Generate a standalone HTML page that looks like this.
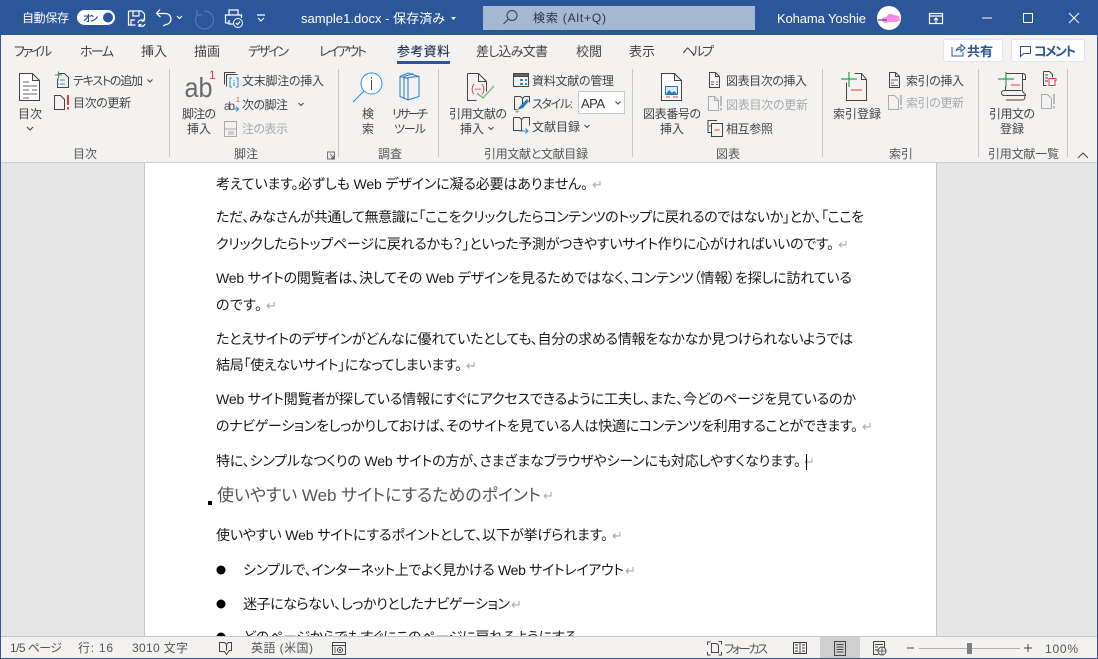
<!DOCTYPE html>
<html lang="ja"><head><meta charset="utf-8"><title>sample1.docx</title>
<style>
html,body{margin:0;padding:0;width:1098px;height:659px;overflow:hidden;background:#f3f2f1}
svg{display:block}
text{font-family:"Liberation Sans","Noto Sans CJK JP",sans-serif;font-feature-settings:"palt"}
.w{fill:#fff;font-size:12px}
.r{fill:#444;font-size:12px}
.g{fill:#a9a9a9;font-size:12px}
.d{fill:#1a1a1a;font-size:14px}
.a{fill:#aaa;font-size:13px}
.s{fill:#555;font-size:12px}
.i{fill:none;stroke:#444;stroke-width:1}
.ig{fill:none;stroke:#aaa;stroke-width:1}
.wi{fill:none;stroke:#fff;stroke-width:1.2}
</style></head><body>
<svg width="1098" height="659" viewBox="0 0 1098 659" xmlns="http://www.w3.org/2000/svg">
<!-- backgrounds -->
<rect width="1098" height="659" fill="#f3f2f1"/>
<rect x="0" y="162" width="1098" height="475" fill="#e6e6e6"/>
<rect x="0" y="162" width="1098" height="1" fill="#d0d0d0"/>
<rect x="145" y="163" width="791" height="474" fill="#fff"/>
<rect x="144" y="163" width="1" height="474" fill="#c6c6c6"/>
<rect x="936" y="163" width="1" height="474" fill="#c6c6c6"/>
<rect width="1098" height="35" fill="#2b579a"/>
<rect x="0" y="0" width="1" height="659" fill="#2b579a"/>
<rect x="1097" y="0" width="1" height="659" fill="#2b579a"/>
<rect x="0" y="658" width="1098" height="1" fill="#2b579a"/>

<!-- title bar -->
<text class="w" x="22" y="22" textLength="47">自動保存</text>
<rect x="77" y="10" width="38" height="15" rx="7.500" fill="#fff"/>
<text x="83" y="21.500" font-size="9" fill="#2b579a" textLength="15" font-weight="700">オン</text>
<circle cx="108" cy="17.500" r="5" fill="#2b579a"/>
<path class="wi" d="M128.500 11h13l3 3v6M128.500 11v14h7M133 11v5h6v-5M131 25v-5h4"/>
<path class="wi" d="M138 23a3.500 3.500 0 0 1 6-2m1 3a3.500 3.500 0 0 1-6 1M144 18.500v2.500h-2.500M139 27v-2.500h2.500"/>
<path class="wi" d="M160 9.500l-3.500 4 4 3.500M157 13.500h8a5.500 5.500 0 0 1 1 11l-3 1.500"/>
<path class="wi" d="M177 16l2.500 2.500 2.500-2.500" stroke-width="1"/>
<path d="M204 11a9 9 0 1 1-7 4M197 10v5h5" fill="none" stroke="#5578ae" stroke-width="1.200"/>
<path class="wi" d="M229 15v-5h9v5M225.500 23v-8h16v3M229 23h-3.500M229 20v4h4"/>
<circle cx="238" cy="23" r="4.500" fill="#2b579a" stroke="#fff"/>
<path class="wi" d="M236 23l1.500 1.500 2.500-3" stroke-width=".9"/>
<path class="wi" d="M257 15h8M258 18l3 3 3-3" stroke-width="1"/>
<text x="301" y="23" font-size="13" fill="#fff" textLength="144">sample1.docx  -  保存済み</text>
<path d="M451 17h5l-2.500 3z" fill="#fff"/>
<rect x="483" y="6" width="272" height="24" fill="#a5b8d2"/>
<circle cx="512" cy="15.500" r="5" fill="none" stroke="#2a3f5f" stroke-width="1"/>
<path d="M508.500 19l-5 5" stroke="#2a3f5f" stroke-width="1"/>
<text x="533" y="22" font-size="12" fill="#26344a" textLength="73">検索 (Alt+Q)</text>
<text x="777" y="23" font-size="13" fill="#fff" textLength="89">Kohama Yoshie</text>
<circle cx="889" cy="18" r="12" fill="#fff"/>
<path d="M882 18l4-1 3-3h3l2 1 5 1 1 4-3 2h-8l-4 1-3-2z" fill="#f58ae8"/>
<path d="M878 20h9" stroke="#333" stroke-width="1"/>
<path class="wi" d="M929.500 13.500h13v10h-13zM929.500 16h13M936 23v-5M934 20l2-2 2 2" stroke-width="1"/>
<path d="M982 18h10" stroke="#fff" stroke-width="1"/>
<rect x="1023.500" y="13.500" width="9" height="9" fill="none" stroke="#fff"/>
<path d="M1069 13l10 10M1079 13l-10 10" stroke="#fff" stroke-width="1"/>

<!-- tabs -->
<g>
<text class="r" x="14" y="56" textLength="38" style="font-size:13px">ファイル</text>
<text class="r" x="80" y="56" textLength="34" style="font-size:13px">ホーム</text>
<text class="r" x="141" y="56" textLength="26" style="font-size:13px">挿入</text>
<text class="r" x="194" y="56" textLength="26" style="font-size:13px">描画</text>
<text class="r" x="248" y="56" textLength="41" style="font-size:13px">デザイン</text>
<text class="r" x="319" y="56" textLength="48" style="font-size:13px">レイアウト</text>
<text x="397" y="56" textLength="53" style="font-size:13px;fill:#2b3f60;font-weight:500">参考資料</text>
<text class="r" x="476" y="56" textLength="72" style="font-size:13px">差し込み文書</text>
<text class="r" x="576" y="56" textLength="26" style="font-size:13px">校閲</text>
<text class="r" x="629" y="56" textLength="26" style="font-size:13px">表示</text>
<text class="r" x="682" y="56" textLength="32" style="font-size:13px">ヘルプ</text>
</g>
<rect x="397" y="61" width="53" height="3" fill="#2b579a"/>
<rect x="943.500" y="39.500" width="59" height="22" rx="2" fill="#fff" stroke="#e4e4e4"/>
<path d="M952 47v9h11v-4M956 51c1-3 3-4 5-4v-2.500l4 3.500-4 3.500V49c-2 0-4 1-5 2z" fill="none" stroke="#2b579a"/>
<text x="967" y="56" textLength="26" style="font-size:13px;fill:#2b579a;font-weight:700">共有</text>
<rect x="1011.500" y="39.500" width="73" height="22" rx="2" fill="#fff" stroke="#e4e4e4"/>
<path d="M1020.500 46.500h10v7h-7l-3 3z" fill="none" stroke="#2b579a"/>
<text x="1034" y="56" textLength="42" style="font-size:13px;fill:#2b579a;font-weight:700">コメント</text>

<!-- group separators -->
<g fill="#c6c6c6">
<rect x="169" y="69" width="1" height="88"/><rect x="338" y="69" width="1" height="88"/>
<rect x="438" y="69" width="1" height="88"/><rect x="632" y="69" width="1" height="88"/>
<rect x="822" y="69" width="1" height="88"/><rect x="978" y="69" width="1" height="88"/>
<rect x="1067" y="69" width="1" height="88"/>
</g>

<!-- 目次 group -->
<path class="i" d="M19.500 73.500h13l7 7v20h-20zM32.500 73.500v7h7" style="fill:#fff"/>
<path d="M23 82h6M23 86h14M23 90h6M32 90h5M23 94h14M23 98h6" stroke="#666"/>
<text class="r" x="18" y="118" textLength="24">目次</text>
<path class="i" d="M27 127l3 3 3-3"/>
<path class="i" d="M58.500 73.500h6l4 4v10h-11v-9"/>
<path d="M55 75h7M58.500 71.500v7" stroke="#2d9e4c" fill="none"/>
<path d="M60 80h5M60 84h5" stroke="#2b88d8"/>
<path d="M57 80h2M57 84h2" stroke="#2b88d8"/>
<text class="r" x="73" y="85" textLength="70">テキストの追加</text>
<path class="i" d="M147.500 79.500l2.500 2.500 2.500-2.500"/>
<path class="i" d="M54.500 95.500h6l4 4v10h-10z"/>
<rect x="67" y="95" width="2" height="10" fill="#e83a3a"/><rect x="67" y="107" width="2" height="2.500" fill="#e83a3a"/>
<text class="r" x="73" y="107" textLength="58">目次の更新</text>
<text class="s" x="73" y="158" textLength="24">目次</text>

<!-- 脚注 group -->
<text x="184.500" y="97" style="font-size:28px;fill:#6a6a6a" textLength="28" lengthAdjust="spacingAndGlyphs">ab</text>
<text x="209" y="79" style="font-size:12px;fill:#e83a3a">1</text>
<text class="r" x="182" y="118" textLength="34">脚注の</text>
<text class="r" x="187" y="133" textLength="24">挿入</text>
<path class="i" d="M224.500 84.500v-12h11M226.500 86.500v-12h11"/>
<path d="M232 78h-2v9h2M236 78h2v9h-2M234 80v1M234 82v4" fill="none" stroke="#2b88d8"/>
<text class="r" x="242" y="85" textLength="82">文末脚注の挿入</text>
<text x="224" y="110" style="font-size:12px;fill:#555" textLength="11">ab</text>
<text x="236" y="102" style="font-size:7px;fill:#e83a3a">1</text>
<path d="M233 109h5M236 106.500l2.500 2.500-2.500 2.500" fill="none" stroke="#2b88d8"/>
<text class="r" x="242" y="109" textLength="46">次の脚注</text>
<path class="i" d="M298.500 103l2.500 2.500 2.500-2.500"/>
<path class="ig" d="M224.500 121.500h12v15h-12zM224.500 129h12M228 132h6M228 134h6"/>
<text class="g" x="242" y="133" textLength="46">注の表示</text>
<text class="s" x="234" y="158" textLength="24">脚注</text>
<path d="M327.500 159v-7h7v7zM330 154l4 4M331 158h3v-3" fill="none" stroke="#666" stroke-width=".9"/>

<!-- 調査 group -->
<circle cx="371.500" cy="83.500" r="10.500" fill="#fff" stroke="#2b88d8" stroke-width="1"/>
<path d="M364 91l-11 11" stroke="#2b88d8" stroke-width="1"/>
<path d="M371.500 80v10" stroke="#444"/><rect x="371" y="77" width="1" height="1.500" fill="#444"/>
<text class="r" x="362" y="118">検</text>
<text class="r" x="362" y="133">索</text>
<path d="M400 76.500l8-3.500 11 3.500v20l-11 3.500-8-3.500zM408 99.500v-22l11-1M404 98.500v-22l9-3M400 76.500l8 2" fill="none" stroke="#2b78c8"/>
<text class="r" x="392" y="118" textLength="36">リサーチ</text>
<text class="r" x="394" y="133" textLength="32">ツール</text>
<text class="s" x="378" y="158" textLength="24">調査</text>

<!-- 引用文献 group -->
<path class="i" d="M467.500 73.500h11l8 8v10M467.500 73.500v27h9M478.500 73.500v8h8"/>
<text x="471" y="92" style="font-size:11px;fill:#e83a3a" textLength="14">(–)</text>
<path d="M477 93l6 5 11-12" fill="none" stroke="#6bb56b" stroke-width="1.200"/>
<text class="r" x="449" y="118" textLength="58">引用文献の</text>
<text class="r" x="460" y="133" textLength="24">挿入</text>
<path class="i" d="M488.500 127l2.500 2.500 2.500-2.500"/>
<path class="i" d="M513.500 73.500h15v13h-15zM513.500 76.500h15M513.500 73.500v13"/>
<rect x="514" y="74" width="14" height="2" fill="#666"/>
<path d="M520 79h3v2h-3zM525 79h2v2h-2zM520 83h3v2h-3zM525 83h2v2h-2z" fill="#2b88d8"/>
<text class="r" x="532" y="85" textLength="82">資料文献の管理</text>
<path class="i" d="M514.500 96.500h6l2 2 2-2h5v6M522.500 98.500v6M514.500 96.500v13h2"/>
<path d="M517 110l3-4 7-7 2 2-6 7z" fill="#2b78c8"/>
<path d="M515 112l2-2 2 1-2 2z" fill="#d0a040"/>
<text class="r" x="532" y="108" textLength="41">スタイル:</text>
<rect x="578.500" y="91.500" width="46" height="22" fill="#fff" stroke="#c8c8c8"/>
<text x="581" y="108" style="font-size:13px;fill:#333" textLength="24">APA</text>
<path class="i" d="M615.500 101.500l2.500 2.500 2.500-2.500"/>
<path class="i" d="M513.500 117.500h6l2 2 2-2h6v8M521.500 119.500v11M513.500 117.500v13h9"/>
<path d="M519 131h9M525.500 128.500l2.500 2.500-2.500 2.500" fill="none" stroke="#2b88d8"/>
<text class="r" x="532" y="131" textLength="48">文献目録</text>
<path class="i" d="M584.500 125l2.500 2.500 2.500-2.500"/>
<text class="s" x="484" y="158" textLength="104">引用文献と文献目録</text>

<!-- 図表 group -->
<path class="i" d="M661.500 73.500h13l7 7v20h-20zM674.500 73.500v7h7" style="fill:#fff"/>
<rect x="665.500" y="86.500" width="12" height="8" fill="#d8ecf8" stroke="#2b78c8"/>
<path d="M666 94l3-4 3 3 2-2 3 3z" fill="#2b78c8"/>
<path d="M666 97h4M673 97h5" stroke="#e83a3a"/>
<text class="r" x="643" y="118" textLength="58">図表番号の</text>
<text class="r" x="660" y="133" textLength="24">挿入</text>
<path class="i" d="M709.500 72.500h6l4 4v11h-10zM715.500 72.500v4h4"/>
<path d="M711 82h3M716 82h2M711 84.500h3M716 84.500h2" stroke="#666"/>
<text class="r" x="726" y="85" textLength="81">図表目次の挿入</text>
<path class="ig" d="M708.500 96.500h6l4 4v10h-10zM714.500 96.500v4h4"/>
<rect x="720" y="96" width="2" height="10" fill="#bbb"/><rect x="720" y="108" width="2" height="2.500" fill="#bbb"/>
<text class="g" x="726" y="109" textLength="82">図表目次の更新</text>
<path class="i" d="M717 120.500h-9v12h3M711.500 123.500h11v13h-11z"/>
<path d="M709 126h2M714.500 130h5" stroke="#e83a3a"/>
<text class="r" x="726" y="133" textLength="47">相互参照</text>
<text class="s" x="716" y="158" textLength="24">図表</text>

<!-- 索引 group -->
<path class="i" d="M854.500 73.500h7l5 6v21h-20v-18M861.500 73.500v6h5"/>
<path d="M841 79h16M849 72v15" stroke="#2d9e4c" stroke-width="1.200"/>
<path d="M851 90h11" stroke="#e83a3a"/>
<text class="r" x="833" y="118" textLength="48">索引登録</text>
<path class="i" d="M889.500 72.500h6l4 4v11h-10zM895.500 72.500v4h4"/>
<path d="M891 80h7M891 83h3M891 85.500h7" stroke="#666"/>
<text class="r" x="906" y="85" textLength="58">索引の挿入</text>
<path class="ig" d="M888.500 95.500h6l4 4v10h-10z"/>
<rect x="900" y="95" width="2" height="10" fill="#bbb"/><rect x="900" y="107" width="2" height="2.500" fill="#bbb"/>
<text class="g" x="906" y="107" textLength="58">索引の更新</text>
<text class="s" x="889" y="158" textLength="24">索引</text>

<!-- 引用文献一覧 group -->
<path class="i" d="M1006.500 73.500h16c2 0 3 1 3 3v3h-3v-6M1022.500 73.500v17c0 2 2 3 3 4v1h-21c-2 0-3-1-3-2.500s1-2.500 3-2.500h17M1005.500 86v4M1006 100h17c2 0 2-3 2-5"/>
<path d="M998 79h16M1006 72v15" stroke="#2d9e4c" stroke-width="1.200"/>
<path d="M1011 85h9" stroke="#e83a3a"/>
<text class="r" x="989" y="118" textLength="46">引用文の</text>
<text class="r" x="1000" y="133" textLength="24">登録</text>
<path class="i" d="M1043.500 71.500h6l3 3v3M1043.500 71.500v14h3M1045 75h3M1045 78h3M1045 81h3"/>
<path d="M1049 78.500h7v2h-1v5h-6z" fill="#fff" stroke="#e83a3a"/>
<path class="ig" d="M1041.500 94.500h6l4 4v10h-10z"/>
<rect x="1053" y="94" width="2" height="10" fill="#bbb"/><rect x="1053" y="106" width="2" height="2.500" fill="#bbb"/>
<text class="s" x="988" y="158" textLength="71">引用文献一覧</text>
<path class="i" d="M1078 158l5-5 5 5"/>

<!-- document -->
<svg x="145" y="163" width="791" height="473" viewBox="145 163 791 473" overflow="hidden">
<text class="d" x="216" y="189" textLength="372">考えています。必ずしも Web デザインに凝る必要はありません。</text>
<text class="a" x="592" y="189">↵</text>
<text class="d" x="216" y="222" textLength="648">ただ、みなさんが共通して無意識に「ここをクリックしたらコンテンツのトップに戻れるのではないか」とか、「ここを</text>
<text class="d" x="216" y="249" textLength="618">クリックしたらトップページに戻れるかも？」といった予測がつきやすいサイト作りに心がければいいのです。</text>
<text class="a" x="838" y="249">↵</text>
<text class="d" x="216" y="283" textLength="636">Web サイトの閲覧者は、決してその Web デザインを見るためではなく、コンテンツ（情報）を探しに訪れている</text>
<text class="d" x="216" y="310" textLength="46">のです。</text>
<text class="a" x="266" y="310">↵</text>
<text class="d" x="216" y="344" textLength="637">たとえサイトのデザインがどんなに優れていたとしても、自分の求める情報をなかなか見つけられないようでは</text>
<text class="d" x="216" y="370" textLength="246">結局「使えないサイト」になってしまいます。</text>
<text class="a" x="466" y="370">↵</text>
<text class="d" x="216" y="404" textLength="640">Web サイト閲覧者が探している情報にすぐにアクセスできるように工夫し、また、今どのページを見ているのか</text>
<text class="d" x="216" y="431" textLength="642">のナビゲーションをしっかりしておけば、そのサイトを見ている人は快適にコンテンツを利用することができます。</text>
<text class="a" x="862" y="431">↵</text>
<text class="d" x="216" y="466" textLength="585">特に、シンプルなつくりの Web サイトの方が、さまざまなブラウザやシーンにも対応しやすくなります。</text>
<text class="a" x="804" y="466">↵</text>
<rect x="806" y="454" width="1" height="16" fill="#000"/>
<rect x="208" y="501" width="4" height="4" fill="#000"/>
<text x="217" y="501" textLength="324" style="font-size:17px;fill:#555">使いやすい Web サイトにするためのポイント</text>
<text class="a" x="543" y="500">↵</text>
<text class="d" x="216" y="540" textLength="392">使いやすい Web サイトにするポイントとして、以下が挙げられます。</text>
<text class="a" x="612" y="540">↵</text>
<circle cx="221" cy="570" r="4.500" fill="#000"/>
<text class="d" x="243" y="575" textLength="381">シンプルで、インターネット上でよく見かける Web サイトレイアウト</text>
<text class="a" x="625" y="575">↵</text>
<circle cx="221" cy="604" r="4.500" fill="#000"/>
<text class="d" x="243" y="609" textLength="267">迷子にならない、しっかりとしたナビゲーション</text>
<text class="a" x="511" y="609">↵</text>
<circle cx="221" cy="637" r="4.500" fill="#000"/>
<text class="d" x="243" y="642" textLength="334">どのページからでもすぐにこのページに戻れるようにする</text>
</svg>

<!-- status bar -->
<rect x="1" y="636" width="1096" height="22" fill="#f3f2f1"/>
<rect x="1" y="636" width="1096" height="1" fill="#c6c6c6"/>
<g>
<text class="s" x="10" y="652" textLength="52">1/5 ページ</text>
<text class="s" x="78" y="652" textLength="35">行: 16</text>
<text class="s" x="132" y="652" textLength="56">3010 文字</text>
<path class="i" d="M219.500 642.500h5l2 2 2-2h3v8h-2l-3 4-2-3h-5zM226.500 644.500v6"/>
<text class="s" x="251" y="652" textLength="62">英語 (米国)</text>
<path class="i" d="M332.500 642.500h13v12h-13zM332.500 645.500h13"/>
<circle cx="340" cy="650" r="2.500" fill="none" stroke="#444"/><circle cx="340" cy="650" r="1" fill="#444"/>
<path d="M334 648h2M334 650h2M334 652h2" stroke="#666"/>
<path class="i" d="M707.500 645v-3h3M707.500 652v3h3M721.500 652v3h-3M718.500 641.500h3v3"/>
<path class="i" d="M711.500 643.500h5l2 2v7h-7z"/>
<text class="s" x="724" y="653" textLength="44">フォーカス</text>
<path class="i" d="M793.500 642.500h13v11h-13zM800 642.500v11M795 645h3M795 648h3M795 651h3M802 645h3M802 648h3M802 651h3"/>
<rect x="820" y="637" width="40" height="21" fill="#cfcfcf"/>
<path class="i" d="M834.500 641.500h11v14h-11zM836.500 644.500h7M836.500 647h7M836.500 649.500h7M836.500 652h7"/>
<path class="i" d="M873.500 641.500h11v11h-4M873.500 641.500v13h5M875 644.500h8M875 647h3M875 650h3"/>
<circle cx="882" cy="651" r="4" fill="#f3f2f1" stroke="#444"/><path d="M878 651h8M882 647v8" stroke="#444" stroke-width=".8"/>
<path d="M907 648h7" stroke="#444"/>
<rect x="919" y="648" width="101" height="1" fill="#b0b0b0"/>
<rect x="967" y="643" width="5" height="11" fill="#808080"/>
<path d="M1024 648h8M1028 644v8" stroke="#444"/>
<text class="s" x="1045" y="653" textLength="33">100%</text>
</g>
</svg>
</body></html>
